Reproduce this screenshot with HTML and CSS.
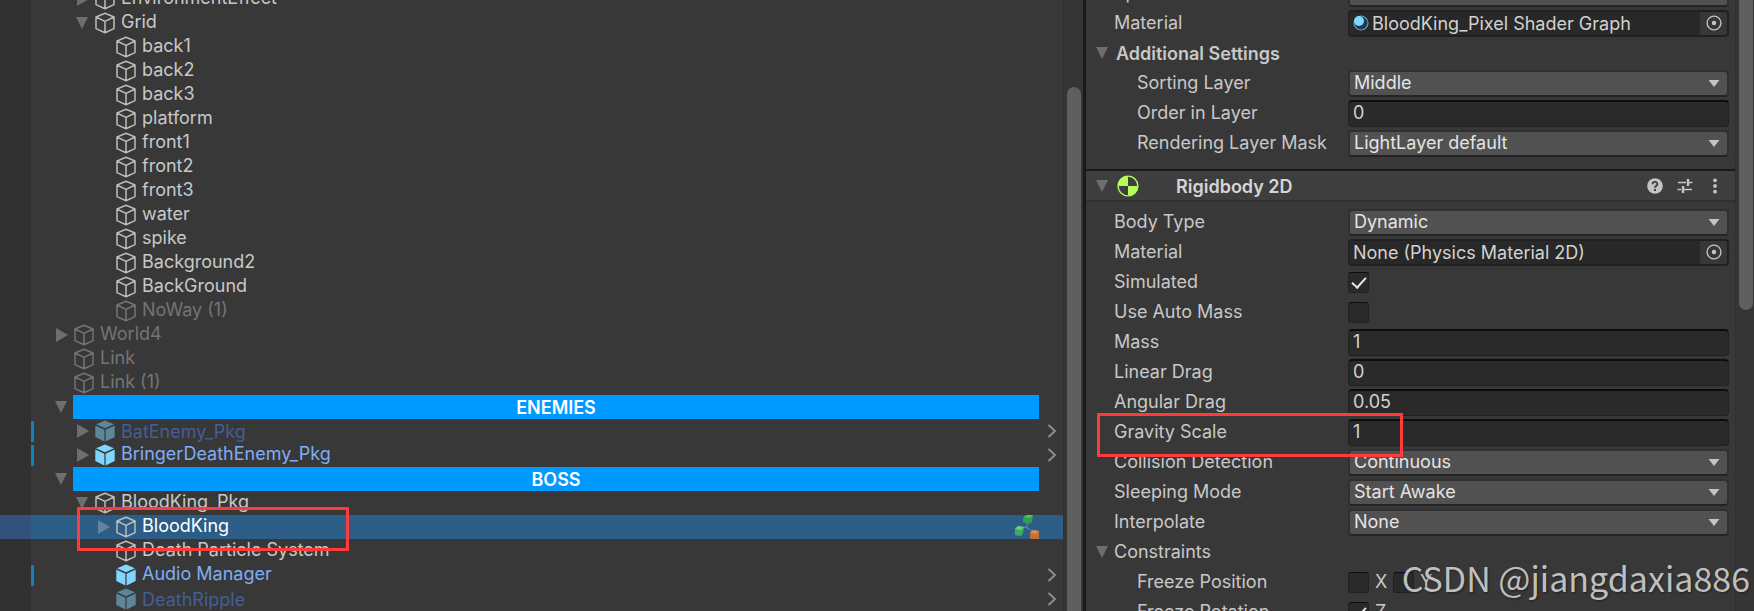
FILE: index.html
```html
<!DOCTYPE html>
<html lang="en">
<head>
    <meta charset="UTF-8">
    <meta name="viewport" content="width=device-width, initial-scale=1.0">
    <title>Hierarchy & Inspector</title>
    <link rel="stylesheet" href="styles.css">
</head>
<body>
    <!-- Shared icons -->
    <svg class="sprite" aria-hidden="true">
        <symbol id="cube" viewBox="0 0 20 22">
            <path d="M10 1.2 L19 5 V16.6 L10 20.8 L1 16.6 V5 Z M1 5 L10 9.4 L19 5 M10 9.4 V20.8" fill="none" stroke="currentColor" stroke-width="1.5" stroke-linejoin="round"/>
        </symbol>
        <symbol id="prefab" viewBox="0 0 20 22">
            <path d="M10 0.4 L19 4.2 L10 8.2 L1 4.2 Z M0.3 5.6 L9.4 9.8 V21.4 L0.3 17 Z M19.7 5.6 L10.6 9.8 V21.4 L19.7 17 Z" fill="currentColor"/>
        </symbol>
        <symbol id="open" viewBox="0 0 18 12">
            <path d="M3 0 H15 L9 12 Z" fill="currentColor"/>
        </symbol>
        <symbol id="closed" viewBox="0 0 18 14">
            <path d="M4 0 V14 L16 7 Z" fill="currentColor"/>
        </symbol>
        <symbol id="chevron" viewBox="0 0 10 14">
            <path d="M1.5 1 L8 7 L1.5 13" fill="none" stroke="currentColor" stroke-width="2"/>
        </symbol>
        <symbol id="caret" viewBox="0 0 12 7">
            <path d="M0.5 0 H11.5 L6 7 Z" fill="currentColor"/>
        </symbol>
        <symbol id="picker" viewBox="0 0 16 16">
            <circle cx="8" cy="8" r="6.9" fill="none" stroke="currentColor" stroke-width="1.4"/>
            <circle cx="8" cy="8" r="2.2" fill="currentColor"/>
        </symbol>
    </svg>

    <div class="editor">
        <!-- Hierarchy -->
        <section class="hierarchy">
            <ul class="tree">
                <li class="row depth-2"><svg class="arrow closed"><use href="#closed"/></svg><svg class="cube"><use href="#cube"/></svg><span class="name">EnvironmentEffect</span></li>
                <li class="row depth-2"><svg class="arrow"><use href="#open"/></svg><svg class="cube"><use href="#cube"/></svg><span class="name">Grid</span></li>
                <li class="row depth-3"><span class="arrow"></span><svg class="cube"><use href="#cube"/></svg><span class="name">back1</span></li>
                <li class="row depth-3"><span class="arrow"></span><svg class="cube"><use href="#cube"/></svg><span class="name">back2</span></li>
                <li class="row depth-3"><span class="arrow"></span><svg class="cube"><use href="#cube"/></svg><span class="name">back3</span></li>
                <li class="row depth-3"><span class="arrow"></span><svg class="cube"><use href="#cube"/></svg><span class="name">platform</span></li>
                <li class="row depth-3"><span class="arrow"></span><svg class="cube"><use href="#cube"/></svg><span class="name">front1</span></li>
                <li class="row depth-3"><span class="arrow"></span><svg class="cube"><use href="#cube"/></svg><span class="name">front2</span></li>
                <li class="row depth-3"><span class="arrow"></span><svg class="cube"><use href="#cube"/></svg><span class="name">front3</span></li>
                <li class="row depth-3"><span class="arrow"></span><svg class="cube"><use href="#cube"/></svg><span class="name">water</span></li>
                <li class="row depth-3"><span class="arrow"></span><svg class="cube"><use href="#cube"/></svg><span class="name">spike</span></li>
                <li class="row depth-3"><span class="arrow"></span><svg class="cube"><use href="#cube"/></svg><span class="name">Background2</span></li>
                <li class="row depth-3"><span class="arrow"></span><svg class="cube"><use href="#cube"/></svg><span class="name">BackGround</span></li>
                <li class="row depth-3 inactive"><span class="arrow"></span><svg class="cube"><use href="#cube"/></svg><span class="name">NoWay (1)</span></li>
                <li class="row depth-1 inactive"><svg class="arrow closed"><use href="#closed"/></svg><svg class="cube"><use href="#cube"/></svg><span class="name">World4</span></li>
                <li class="row depth-1 inactive"><span class="arrow"></span><svg class="cube"><use href="#cube"/></svg><span class="name">Link</span></li>
                <li class="row depth-1 inactive"><span class="arrow"></span><svg class="cube"><use href="#cube"/></svg><span class="name">Link (1)</span></li>
                <li class="row depth-1 group"><svg class="arrow"><use href="#open"/></svg><span class="banner">ENEMIES</span></li>
                <li class="row depth-2 prefab prefab-off changed"><svg class="arrow closed"><use href="#closed"/></svg><svg class="cube"><use href="#prefab"/></svg><span class="name">BatEnemy_Pkg</span><svg class="chevron"><use href="#chevron"/></svg></li>
                <li class="row depth-2 prefab changed"><svg class="arrow closed"><use href="#closed"/></svg><svg class="cube"><use href="#prefab"/></svg><span class="name">BringerDeathEnemy_Pkg</span><svg class="chevron"><use href="#chevron"/></svg></li>
                <li class="row depth-1 group"><svg class="arrow"><use href="#open"/></svg><span class="banner">BOSS</span></li>
                <li class="row depth-2"><svg class="arrow"><use href="#open"/></svg><svg class="cube"><use href="#cube"/></svg><span class="name">BloodKing_Pkg</span></li>
                <li class="row depth-3 selected">
                    <svg class="arrow closed"><use href="#closed"/></svg><svg class="cube"><use href="#cube"/></svg><span class="name">BloodKing</span>
                    <svg class="graph" viewBox="0 0 24 24">
                        <path d="M12 8 V14 M5 13 L12 12 M12 13 L19 17" stroke="#6d8794" stroke-width="1" fill="none"/>
                        <path d="M8 3 L11 0 H18 L17 7 L14 9 L8 7 Z" fill="#2fa24f"/>
                        <path d="M9 2 L12 0 H18 L15 3 Z" fill="#4fc06c"/>
                        <path d="M0 14 L3 11 L9 12 L8 18 L6 21 L0 20 Z" fill="#3fae5c"/>
                        <path d="M0 14 L3 11 L9 12 L6 15 Z" fill="#6bcf84"/>
                        <path d="M15 18 L18 15 L24 16 V24 H15 Z" fill="#c4703a"/>
                        <path d="M15 18 L18 15 L24 16 L21 19 Z" fill="#d98a55"/>
                    </svg>
                    <span class="mark mark-object"></span>
                </li>
                <li class="row depth-3"><span class="arrow"></span><svg class="cube"><use href="#cube"/></svg><span class="name">Death Particle System</span></li>
                <li class="row depth-3 prefab changed"><span class="arrow"></span><svg class="cube"><use href="#prefab"/></svg><span class="name">Audio Manager</span><svg class="chevron"><use href="#chevron"/></svg></li>
                <li class="row depth-3 prefab prefab-off"><span class="arrow"></span><svg class="cube"><use href="#prefab"/></svg><span class="name">DeathRipple</span><svg class="chevron"><use href="#chevron"/></svg></li>
            </ul>
            <div class="scrollbar"><div class="thumb thumb-tree"></div></div>
        </section>

        <!-- Inspector -->
        <section class="inspector">
            <div class="components">
                <div class="fields">
                    <div class="field">
                        <label for="sort-point">Sprite Sort Point</label>
                        <div class="dropdown"><select id="sort-point"><option>Center</option></select><svg class="caret"><use href="#caret"/></svg></div>
                    </div>
                    <div class="field">
                        <label for="renderer-material">Material</label>
                        <div class="object">
                            <svg class="material" viewBox="0 0 16 16">
                                <circle cx="8" cy="8" r="7" fill="#1d3a4a" stroke="#5a9fc0" stroke-width="1.2"/>
                                <circle cx="6" cy="6" r="5" fill="#80d6fd"/>
                            </svg>
                            <input id="renderer-material" type="text" value="BloodKing_Pixel Shader Graph" readonly>
                            <button class="pick" type="button" aria-label="Pick material"><svg><use href="#picker"/></svg></button>
                        </div>
                    </div>
                    <div class="foldout bold"><svg class="arrow"><use href="#open"/></svg><span>Additional Settings</span></div>
                    <div class="field nested">
                        <label for="sorting-layer">Sorting Layer</label>
                        <div class="dropdown"><select id="sorting-layer"><option>Middle</option></select><svg class="caret"><use href="#caret"/></svg></div>
                    </div>
                    <div class="field nested">
                        <label for="layer-order">Order in Layer</label>
                        <input class="text" id="layer-order" type="text" value="0">
                    </div>
                    <div class="field nested">
                        <label for="layer-mask">Rendering Layer Mask</label>
                        <div class="dropdown"><select id="layer-mask"><option>LightLayer default</option></select><svg class="caret"><use href="#caret"/></svg></div>
                    </div>
                </div>

                <header class="component">
                    <svg class="arrow"><use href="#open"/></svg>
                    <svg class="rigidbody" viewBox="0 0 22 22">
                        <circle cx="11" cy="11" r="9.9" fill="none" stroke="#b1fd59" stroke-width="1.4"/>
                        <path d="M11 11 V1 A10 10 0 0 0 1 11 Z M11 11 V21 A10 10 0 0 0 21 11 Z" fill="#b1fd59"/>
                    </svg>
                    <h2>Rigidbody 2D</h2>
                    <button class="tool" type="button" aria-label="Help">
                        <svg viewBox="0 0 16 16">
                            <circle cx="8" cy="8" r="7.8" fill="#c4c4c4"/>
                            <path d="M5.6 6.2 C5.6 3.2 10.4 3.2 10.4 6.2 C10.4 7.8 8 7.8 8 9.8" fill="none" stroke="#3e3e3e" stroke-width="1.8"/>
                            <rect x="7" y="11" width="2" height="2" fill="#3e3e3e"/>
                        </svg>
                    </button>
                    <button class="tool" type="button" aria-label="Presets">
                        <svg viewBox="0 0 16 16">
                            <path d="M1 4.5 H9 M11 4.5 H15.5 M0.5 11.5 H4 M6 11.5 H15" stroke="#c4c4c4" stroke-width="1.5"/>
                            <path d="M11 1 V8 M6 8 V15" stroke="#c4c4c4" stroke-width="2.4"/>
                        </svg>
                    </button>
                    <button class="tool" type="button" aria-label="More">
                        <svg viewBox="0 0 16 16">
                            <circle cx="8" cy="2.3" r="1.9" fill="#c4c4c4"/>
                            <circle cx="8" cy="8" r="1.9" fill="#c4c4c4"/>
                            <circle cx="8" cy="13.7" r="1.9" fill="#c4c4c4"/>
                        </svg>
                    </button>
                </header>

                <div class="fields">
                    <div class="field">
                        <label for="body-type">Body Type</label>
                        <div class="dropdown"><select id="body-type"><option>Dynamic</option></select><svg class="caret"><use href="#caret"/></svg></div>
                    </div>
                    <div class="field">
                        <label for="body-material">Material</label>
                        <div class="object">
                            <input id="body-material" type="text" value="None (Physics Material 2D)" readonly>
                            <button class="pick" type="button" aria-label="Pick material"><svg><use href="#picker"/></svg></button>
                        </div>
                    </div>
                    <div class="field">
                        <label for="simulated">Simulated</label>
                        <input class="check" id="simulated" type="checkbox" checked>
                    </div>
                    <div class="field">
                        <label for="auto-mass">Use Auto Mass</label>
                        <input class="check" id="auto-mass" type="checkbox">
                    </div>
                    <div class="field">
                        <label for="mass">Mass</label>
                        <input class="text" id="mass" type="text" value="1">
                    </div>
                    <div class="field">
                        <label for="linear-drag">Linear Drag</label>
                        <input class="text" id="linear-drag" type="text" value="0">
                    </div>
                    <div class="field">
                        <label for="angular-drag">Angular Drag</label>
                        <input class="text" id="angular-drag" type="text" value="0.05">
                    </div>
                    <div class="field">
                        <label for="gravity">Gravity Scale</label>
                        <input class="text" id="gravity" type="text" value="1">
                        <span class="mark mark-gravity"></span>
                    </div>
                    <div class="field">
                        <label for="collision">Collision Detection</label>
                        <div class="dropdown"><select id="collision"><option>Continuous</option></select><svg class="caret"><use href="#caret"/></svg></div>
                    </div>
                    <div class="field">
                        <label for="sleeping">Sleeping Mode</label>
                        <div class="dropdown"><select id="sleeping"><option>Start Awake</option></select><svg class="caret"><use href="#caret"/></svg></div>
                    </div>
                    <div class="field">
                        <label for="interpolate">Interpolate</label>
                        <div class="dropdown"><select id="interpolate"><option>None</option></select><svg class="caret"><use href="#caret"/></svg></div>
                    </div>
                    <div class="foldout"><svg class="arrow"><use href="#open"/></svg><span>Constraints</span></div>
                    <div class="field nested">
                        <span>Freeze Position</span>
                        <div class="axes">
                            <input class="check" id="freeze-x" type="checkbox"><label for="freeze-x">X</label>
                            <input class="check" id="freeze-y" type="checkbox"><label for="freeze-y">Y</label>
                        </div>
                    </div>
                    <div class="field nested">
                        <span>Freeze Rotation</span>
                        <div class="axes">
                            <input class="check" id="freeze-z" type="checkbox" checked><label for="freeze-z">Z</label>
                        </div>
                    </div>
                </div>
            </div>
            <div class="scrollbar"><div class="thumb thumb-inspector"></div></div>
        </section>
    </div>
    <p class="watermark">CSDN @jiangdaxia886</p>
</body>
</html>
```
FILE: styles.css
```css
* {
    box-sizing: border-box;
}
body {
    margin: 0;
    height: 100vh;
    overflow: hidden;
    position: relative;
    background-color: #383838;
    color: #c8c8c8;
    font-family: Inter, sans-serif;
    font-size: 18px;
}
input, select, button {
    margin: 0;
    padding: 0;
    border: 0;
    font: inherit;
    color: inherit;
    background: none;
    appearance: none;
}
.sprite {
    display: none;
}
.editor {
    display: grid;
    grid-template-columns: 1083fr 671fr;
    height: 100vh;
}
.arrow {
    flex: none;
    width: 18px;
    height: 12px;
    color: #6e6e6e;
}
.closed {
    height: 14px;
}

/* Hierarchy */
.hierarchy {
    display: flex;
    min-width: 0;
    overflow: hidden;
    background: linear-gradient(to right, #313131 31px, #383838 31px);
}
.tree {
    flex: 1;
    margin: -13px 0 0;
    padding: 0;
    list-style: none;
}
.row {
    position: relative;
    display: flex;
    align-items: center;
    height: 24px;
    padding-right: 6px;
    line-height: 24px;
}
.depth-1 {
    padding-left: 52px;
}
.depth-2 {
    padding-left: 73px;
}
.depth-3 {
    padding-left: 94px;
}
.cube {
    flex: none;
    width: 20px;
    height: 22px;
    margin: 0 6px 0 4px;
    color: #bcbcbc;
}
.name {
    flex: 1;
    padding-bottom: 3px;
    white-space: nowrap;
}
.inactive .name, .inactive .cube {
    color: #747474;
}
.group {
    padding-right: 24px;
}
.banner {
    flex: 1;
    height: 24px;
    margin-left: 3px;
    background-color: #0099ff;
    color: #ffffff;
    font-weight: 600;
    line-height: 26px;
    text-align: center;
}
.prefab {
    color: #7fadf5;
}
.prefab .cube {
    color: #80d6fd;
}
.prefab-off {
    color: #445e96;
}
.prefab-off .cube {
    color: #5c879b;
}
.prefab-off .name {
    padding: 2px 0 0;
}
.changed::before {
    content: "";
    position: absolute;
    left: 31px;
    top: 2px;
    width: 3px;
    height: 21px;
    background-color: #0f81be;
}
.chevron {
    width: 10px;
    height: 14px;
    color: #8c8c8c;
}
.selected {
    padding-right: 24px;
    background: linear-gradient(to right, #34517d 31px, #2c5d87 31px);
    color: #ffffff;
}
.selected .arrow {
    color: #67829a;
}
.graph {
    width: 24px;
    height: 24px;
}
.mark {
    position: absolute;
    z-index: 1;
    height: 44px;
    border: 3px solid #ff3b3b;
    pointer-events: none;
}
.mark-object {
    left: 77px;
    top: -8px;
    width: 272px;
}
.mark-gravity {
    left: 11px;
    top: -4px;
    width: 306px;
}

/* Scrollbars */
.scrollbar {
    flex: none;
    width: 20px;
    padding: 0 2px 0 3px;
    border-left: 1px solid #303030;
    background-color: #353535;
}
.thumb {
    height: 100%;
    background-color: #5f5f5f;
}
.thumb-tree {
    margin-top: 87px;
    border-radius: 7px 7px 0 0;
}
.thumb-inspector {
    height: 310px;
    border-radius: 0 0 7px 7px;
}

/* Inspector */
.inspector {
    display: flex;
    min-width: 0;
    overflow: hidden;
    border-left: 3px solid #191919;
}
.inspector .scrollbar {
    width: 19px;
    padding-right: 1px;
}
.components {
    flex: 1;
    min-width: 0;
    margin-top: -22px;
}
.fields {
    padding-right: 6px;
    line-height: 30px;
}
.field {
    position: relative;
    display: grid;
    grid-template-columns: 234px 1fr;
    align-items: center;
    height: 30px;
    padding-left: 28px;
    white-space: nowrap;
}
.nested {
    grid-template-columns: 211px 1fr;
    padding-left: 51px;
}
.foldout {
    display: flex;
    align-items: center;
    gap: 3px;
    height: 30px;
    padding-left: 7px;
}
.bold {
    gap: 5px;
    font-weight: 600;
}
.bold span {
    padding-top: 2px;
}
.text, .object, .dropdown {
    width: 100%;
    height: 27px;
    border-radius: 4px;
}
.text {
    padding: 0 4px 2px;
    border: 1px solid #212121;
    border-top: 2px solid #0d0d0d;
    background-color: #2a2a2a;
    color: #d2d2d2;
}
.object {
    display: flex;
    align-items: center;
    padding-left: 4px;
    overflow: hidden;
    border: 2px solid #202020;
    border-left-width: 1px;
    background-color: #282828;
    color: #d2d2d2;
}
.object input {
    flex: 1;
    min-width: 0;
    padding-top: 1px;
}
.material {
    flex: none;
    width: 16px;
    height: 16px;
    margin-right: 3px;
}
.pick {
    display: flex;
    align-items: center;
    justify-content: center;
    width: 27px;
    height: 24px;
    background-color: #373737;
    color: #c4c4c4;
}
.pick svg {
    width: 16px;
    height: 16px;
}
.dropdown {
    display: flex;
    align-items: center;
    padding-right: 7px;
    border: 2px solid #303030;
    border-bottom-color: #242424;
    background-color: #515151;
    color: #e4e4e4;
}
.dropdown select {
    flex: 1;
    padding-left: 4px;
}
.caret {
    width: 12px;
    height: 7px;
    color: #c4c4c4;
}
.check {
    width: 21px;
    height: 21px;
    border: 1px solid #212121;
    border-top-color: #0d0d0d;
    border-radius: 3px;
    background-color: #2a2a2a;
}
.check:checked::after {
    content: "";
    display: block;
    width: 6px;
    height: 12px;
    margin: 1px auto 0;
    border: solid #e6e6e6;
    border-width: 0 2px 2px 0;
    transform: rotate(42deg);
}
.axes {
    display: flex;
    align-items: center;
    gap: 6px;
}
.axes label {
    width: 12px;
}
.component {
    display: flex;
    align-items: center;
    height: 33px;
    margin: 11px 0 5px;
    padding: 0 12px 0 7px;
    border-top: 2px solid #1a1a1a;
    border-bottom: 2px solid #303030;
    background-color: #3e3e3e;
}
.component h2 {
    flex: 1;
    margin: 0 0 0 37px;
    padding-top: 1px;
    font-size: 18px;
    font-weight: 600;
    color: #d6d6d6;
}
.rigidbody {
    width: 22px;
    height: 22px;
    margin-left: 6px;
}
.tool {
    width: 16px;
    height: 16px;
    margin-left: 14px;
}
.tool svg {
    display: block;
}

.watermark {
    position: absolute;
    right: 4px;
    bottom: 8px;
    z-index: 2;
    margin: 0;
    color: #bfbfbf;
    font-family: "Noto Sans CJK SC", sans-serif;
    font-size: 34px;
    line-height: 50px;
    text-shadow: 1px 1px 2px #222222;
}
```
